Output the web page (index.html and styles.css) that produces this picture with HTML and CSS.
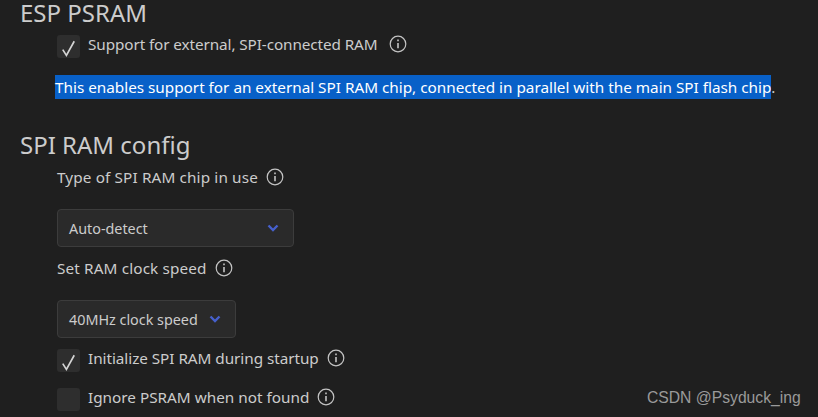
FILE: index.html
```html
<!DOCTYPE html>
<html lang="en">
<head>
<meta charset="utf-8">
<title>ESP PSRAM</title>
<link rel="stylesheet" href="styles.css">
</head>
<body>
<main class="page">
  <h2 class="heading first">ESP PSRAM</h2>
  <div class="indent">
    <div class="check-row">
      <span class="box"><svg viewBox="0 0 22 22" class="tick"><path d="M5.500 14 L9 19.500 L16.500 6"/></svg></span>
      <span class="label tight">Support for external, SPI-connected RAM</span>
      <svg viewBox="0 0 18 18" class="info far"><circle cx="9" cy="9" r="7.800"/><path class="stem" d="M9 8v5.200M9 4.600v1.600"/></svg>
    </div>
  </div>
  <p class="desc"><span class="selected">This enables support for an external SPI RAM chip, connected in parallel with the main SPI flash chip</span>.</p>

  <h2 class="heading second">SPI RAM config</h2>
  <div class="indent">
    <div class="field-label">
      <span class="label loose">Type of SPI RAM chip in use</span>
      <svg viewBox="0 0 18 18" class="info"><circle cx="9" cy="9" r="7.800"/><path class="stem" d="M9 8v5.200M9 4.600v1.600"/></svg>
    </div>
    <div class="select wide"><span>Auto-detect</span><svg viewBox="0 0 12 8" class="chev"><path d="M1.500 1.500 L6 6 L10.500 1.500"/></svg></div>
    <div class="field-label second-label">
      <span class="label loose">Set RAM clock speed</span>
      <svg viewBox="0 0 18 18" class="info"><circle cx="9" cy="9" r="7.800"/><path class="stem" d="M9 8v5.200M9 4.600v1.600"/></svg>
    </div>
    <div class="select narrow"><span>40MHz clock speed</span><svg viewBox="0 0 12 8" class="chev"><path d="M1.500 1.500 L6 6 L10.500 1.500"/></svg></div>
    <div class="check-row init">
      <span class="box"><svg viewBox="0 0 22 22" class="tick"><path d="M5.500 14 L9 19.500 L16.500 6"/></svg></span>
      <span class="label slight">Initialize SPI RAM during startup</span>
      <svg viewBox="0 0 18 18" class="info"><circle cx="9" cy="9" r="7.800"/><path class="stem" d="M9 8v5.200M9 4.600v1.600"/></svg>
    </div>
    <div class="check-row ignore">
      <span class="box"></span>
      <span class="label">Ignore PSRAM when not found</span>
      <svg viewBox="0 0 18 18" class="info"><circle cx="9" cy="9" r="7.800"/><path class="stem" d="M9 8v5.200M9 4.600v1.600"/></svg>
    </div>
  </div>
</main>
<div class="watermark">CSDN @Psyduck_ing</div>
</body>
</html>
```
FILE: styles.css
```css
* { box-sizing: border-box; }
html, body { margin: 0; height: 100%; }
body {
  width: 818px;
  height: 417px;
  overflow: hidden;
  background: #1f1f1f;
  color: #cccccc;
  font-family: "Noto Sans", "Open Sans", sans-serif;
  font-size: 15.3px;
  position: relative;
}
.page { padding: 0 0 0 20px; }
.heading {
  margin: 0;
  font-weight: 400;
  font-size: 24px;
  line-height: 26px;
  color: #cccccc;
}
.second { line-height: 32px; margin-top: 30px; }
.indent { padding-left: 37px; display: flex; flex-direction: column; align-items: flex-start; }
.check-row { display: flex; align-items: center; height: 24px; }
.first + .indent { margin-top: 6px; }
.box {
  width: 23px;
  height: 23px;
  border-radius: 3px;
  background: #2e2e2e;
  margin-top: 4px;
  margin-right: 8px;
  flex: none;
}
.tick { display: block; width: 23px; height: 23px; fill: none; stroke: #d4d4d4; stroke-width: 1.6; }
.label { line-height: 20px; }
.tight { letter-spacing: -0.1px; }
.slight { letter-spacing: -0.05px; }
.loose { letter-spacing: 0.13px; }
.info { width: 18px; height: 18px; margin-left: 8px; fill: none; stroke: #c4c4c4; stroke-width: 1.2; flex: none; }
.far { margin-left: 11px; }
.stem { stroke-width: 1.6; }
.desc { margin: 19px 0 0 35px; line-height: 24px; color: #cccccc; letter-spacing: -0.01px; }
.selected { background: #0860c8; color: #ffffff; display: inline-block; }
.field-label { display: flex; align-items: center; height: 24px; margin-top: 4px; }
.second-label { margin-top: 9px; }
.select {
  display: flex;
  align-items: center;
  justify-content: space-between;
  height: 38px;
  margin-top: 20px;
  padding: 0 14px 0 11px;
  background: #2a2a2a;
  border: 1px solid #3c3c3c;
  border-radius: 4px;
  color: #cccccc;
  font-size: 14.35px;
}
.wide { width: 237px; }
.narrow { width: 179px; }
.chev { width: 12px; height: 8px; fill: none; stroke: #4660cc; stroke-width: 2.4; }
.init { margin-top: 8px; }
.ignore { margin-top: 15px; }
.watermark {
  position: absolute;
  left: 647px;
  top: 389px;
  font-family: "Liberation Sans", sans-serif;
  font-size: 15.7px;
  line-height: 18px;
  color: #9a9a9a;
}
```
